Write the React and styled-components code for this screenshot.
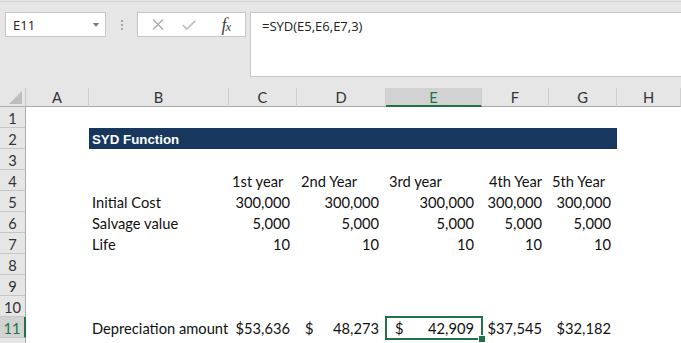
import React from 'react';
import styled, { createGlobalStyle, css } from 'styled-components';

const Global = createGlobalStyle`
  html, body { margin: 0; padding: 0; background: #fff; }
  body { width: 681px; height: 343px; overflow: hidden; font-family: "Lato", "Liberation Sans", sans-serif; }
  * { box-sizing: border-box; }
`;

const GREEN = '#217346';

const Page = styled.div`
  width: 681px;
  height: 343px;
  overflow: hidden;
  display: flex;
  flex-direction: column;
  background: #fff;
`;

const Ribbon = styled.div`
  flex: 0 0 88px;
  height: 88px;
  background: linear-gradient(#e6e6e6 0 1px, #d4d4d4 1px 2px, #e6e6e6 2px);
  display: flex;
  align-items: flex-start;
  padding: 12px 0 0 5px;
  font-family: "Open Sans", "Noto Sans", sans-serif;
`;

const NameBox = styled.div`
  width: 101px;
  height: 25px;
  background: #fff;
  border: 1px solid #c6c6c6;
  display: flex;
  align-items: center;
  justify-content: space-between;
  padding: 0 6px 0 7px;
  font-size: 13px;
  color: #222;
`;

const Caret = styled.span`
  width: 0;
  height: 0;
  border-left: 3.5px solid transparent;
  border-right: 3.5px solid transparent;
  border-top: 4px solid #777;
`;

const Grip = styled.div`
  width: 31px;
  height: 25px;
  display: flex;
  flex-direction: column;
  align-items: center;
  justify-content: center;
  gap: 2px;
`;

const GripDot = styled.span`
  width: 2px;
  height: 2px;
  background: #a8a8a8;
`;

const FxBox = styled.div`
  width: 109px;
  height: 25px;
  background: #fff;
  border: 1px solid #c6c6c6;
  display: flex;
  align-items: center;
  padding-left: 13px;
  gap: 0;
`;

const IconSlot = styled.span`
  width: ${p => p.$w}px;
  margin-left: ${p => p.$ml || 0}px;
  display: flex;
  justify-content: center;
  align-items: center;
`;

const FxText = styled.span`
  font-family: "Liberation Serif", "DejaVu Serif", serif;
  font-style: italic;
  font-size: 18px;
  color: #444;
  letter-spacing: -1px;
  line-height: 1;
  & > small { font-size: 13px; }
`;

const FormulaBox = styled.div`
  flex: 1;
  margin-left: 4px;
  height: 65px;
  background: #fff;
  border: 1px solid #c6c6c6;
  border-right: none;
  padding: 4px 0 0 11px;
  font-size: 13px;
  color: #222;
  line-height: 18px;
`;

const Sheet = styled.div`
  display: grid;
  grid-template-columns: 26px 63px 140px 68px 89px 96px 67px 68px 1fr;
  grid-template-rows: 19px repeat(12, 21px);
  font-family: "Lato", "Liberation Sans", sans-serif;
`;

const Corner = styled.div`
  background: #e6e6e6;
  border-right: 1px solid #c6c6c6;
  border-bottom: 1px solid #ababab;
  display: flex;
  align-items: flex-end;
  justify-content: flex-end;
  padding: 0 3px 2px 0;
`;

const ColHead = styled.div`
  background: #e6e6e6;
  border-right: 1px solid #cfcfcf;
  border-bottom: 1px solid #ababab;
  display: flex;
  align-items: center;
  justify-content: center;
  font-size: 14.7px;
  color: #333;
  ${p => p.$sel && css`
    background: #d2d2d2;
    border-bottom: 2px solid ${GREEN};
    color: ${GREEN};
  `}
`;

const RowHead = styled.div`
  background: #e6e6e6;
  border-right: 1px solid #ababab;
  border-bottom: 1px solid #c6c6c6;
  display: flex;
  align-items: center;
  justify-content: center;
  font-size: 14.7px;
  color: #333;
  padding-top: 1px;
  ${p => p.$sel && css`
    background: #d2d2d2;
    border-right: 2px solid ${GREEN};
    color: ${GREEN};
  `}
`;

const Cell = styled.div`
  position: relative;
  display: flex;
  align-items: center;
  justify-content: ${p => (p.$align === 'right' ? 'flex-end' : p.$align === 'split' ? 'space-between' : 'flex-start')};
  padding: 1px ${p => p.$pr ?? 7}px 0 ${p => p.$pl ?? 3}px;
  font-size: 14.7px;
  color: #111;
  white-space: nowrap;
  ${p => p.$sel && css`
    &::after {
      content: '';
      position: absolute;
      left: -1px;
      top: -1px;
      right: -1px;
      bottom: -2px;
      border: 2px solid ${GREEN};
      pointer-events: none;
    }
    &::before {
      content: '';
      position: absolute;
      right: -3px;
      bottom: -4px;
      width: 6px;
      height: 6px;
      background: ${GREEN};
      border-left: 1px solid #fff;
      border-top: 1px solid #fff;
      z-index: 2;
    }
  `}
`;

const TitleCell = styled.div`
  grid-column: 3 / 9;
  background: #17375e;
  color: #fff;
  font-family: "Liberation Sans", Arial, sans-serif;
  font-weight: bold;
  font-size: 13.3px;
  display: flex;
  align-items: center;
  padding: 1px 0 0 3px;
`;

const COLS = ['A', 'B', 'C', 'D', 'E', 'F', 'G', 'H'];

const R = (text, pr) => ({ text, align: 'right', pr });
const L = (text, pl) => ({ text, align: 'left', pl });
const ACC = (num, pl, pr) => ({ acc: num, align: 'split', pl, pr });

const DATA = {
  4: [null, null, L('1st year', 3), L('2nd Year', 4), L('3rd year', 3), L('4th Year', 7), L('5th Year', 3), null],
  5: [null, L('Initial Cost'), R('300,000'), R('300,000'), R('300,000', 8), R('300,000'), R('300,000', 6), null],
  6: [null, L('Salvage value'), R('5,000'), R('5,000'), R('5,000', 8), R('5,000'), R('5,000', 6), null],
  7: [null, L('Life'), R('10'), R('10'), R('10', 8), R('10'), R('10', 6), null],
  11: [null, L('Depreciation amount'), R('$53,636'), ACC('48,273', 8, 7), { ...ACC('42,909', 9, 8), sel: true }, R('$37,545'), R('$32,182', 6), null],
};

function XIcon() {
  return (
    <svg width="12" height="11" viewBox="0 0 12 11">
      <path d="M1 0.5 L11 10.5 M11 0.5 L1 10.5" stroke="#a9a9a9" strokeWidth="1.3" fill="none" />
    </svg>
  );
}

function CheckIcon() {
  return (
    <svg width="14" height="10" viewBox="0 0 14 10">
      <path d="M0.8 5 L4.8 9 L13.2 0.8" stroke="#bdbdbd" strokeWidth="1.7" fill="none" />
    </svg>
  );
}

function CornerTriangle() {
  return (
    <svg width="13" height="13" viewBox="0 0 13 13">
      <polygon points="13,0 13,13 0,13" fill="#bdbdbd" />
    </svg>
  );
}

function renderRow(r) {
  const out = [
    <RowHead key={`h${r}`} $sel={r === 11}>{r <= 11 ? r : ''}</RowHead>,
  ];
  if (r === 2) {
    out.push(<Cell key="2A" />);
    out.push(<TitleCell key="2T">SYD Function</TitleCell>);
    out.push(<Cell key="2H" />);
    return out;
  }
  const row = DATA[r] || [];
  COLS.forEach((c, i) => {
    const d = row[i];
    if (!d) {
      out.push(<Cell key={`${r}${c}`} />);
      return;
    }
    out.push(
      <Cell key={`${r}${c}`} $align={d.align} $pl={d.pl} $pr={d.pr} $sel={d.sel}>
        {d.acc ? (
          <>
            <span>$</span>
            <span>{d.acc}</span>
          </>
        ) : (
          d.text
        )}
      </Cell>
    );
  });
  return out;
}

export default function App() {
  const rows = Array.from({ length: 12 }, (_, i) => i + 1);
  return (
    <Page>
      <Global />
      <Ribbon>
        <NameBox>
          <span>E11</span>
          <Caret />
        </NameBox>
        <Grip>
          <GripDot />
          <GripDot />
          <GripDot />
        </Grip>
        <FxBox>
          <IconSlot $w={14}><XIcon /></IconSlot>
          <IconSlot $w={20} $ml={14}><CheckIcon /></IconSlot>
          <IconSlot $w={20} $ml={17}>
            <FxText>f<small>x</small></FxText>
          </IconSlot>
        </FxBox>
        <FormulaBox>=SYD(E5,E6,E7,3)</FormulaBox>
      </Ribbon>
      <Sheet>
        <Corner><CornerTriangle /></Corner>
        {COLS.map(c => (
          <ColHead key={c} $sel={c === 'E'}>{c}</ColHead>
        ))}
        {rows.map(renderRow)}
      </Sheet>
    </Page>
  );
}
